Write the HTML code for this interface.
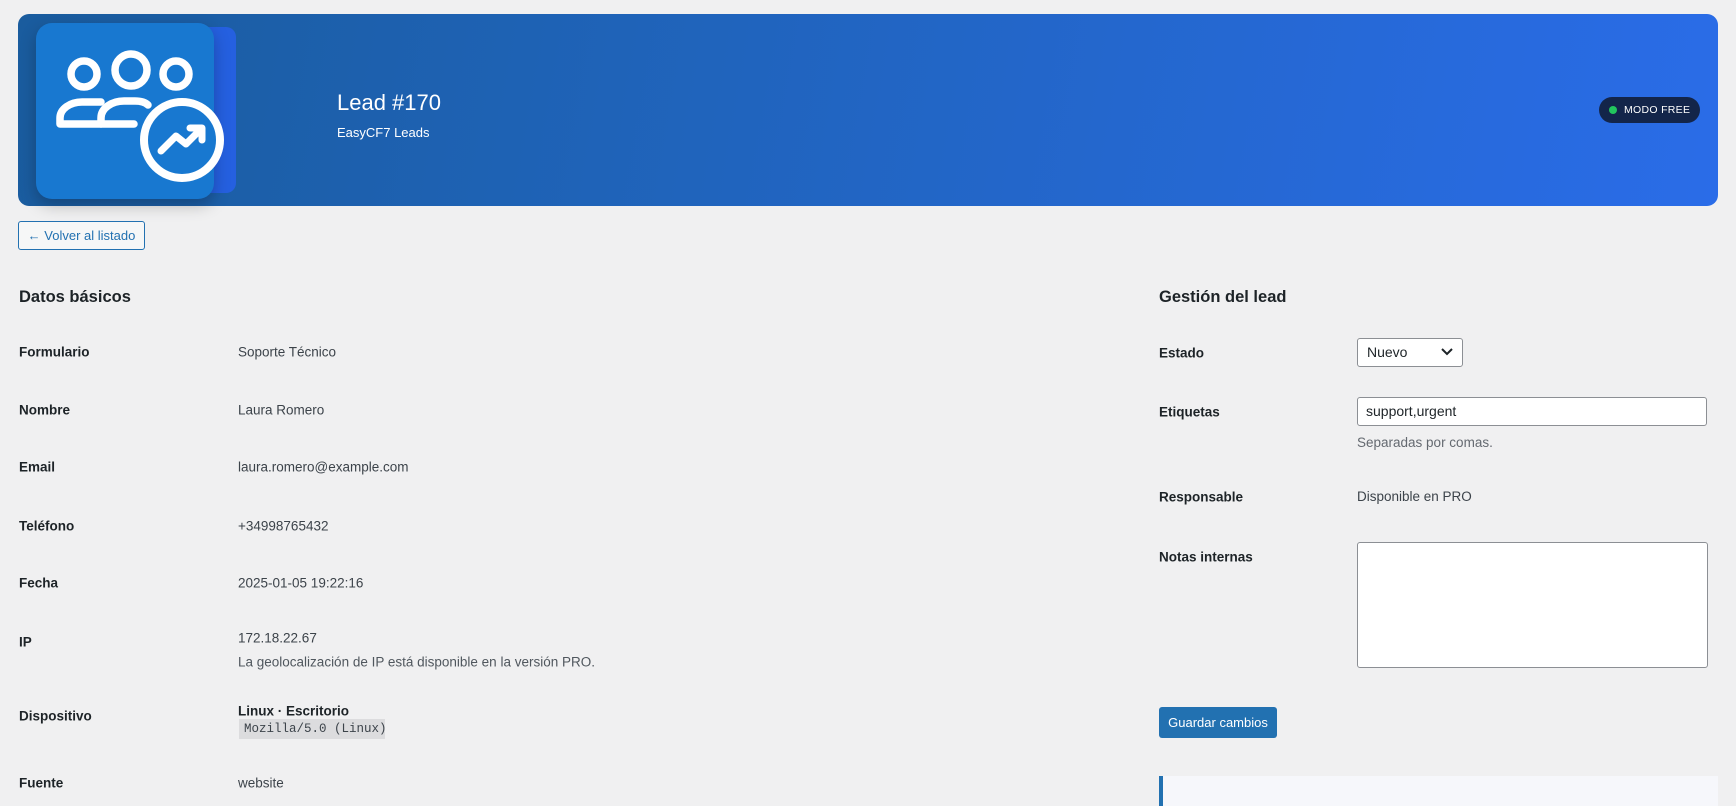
<!DOCTYPE html>
<html><head><meta charset="utf-8"><style>
*{margin:0;padding:0;box-sizing:border-box}
body{width:1736px;height:802px;overflow:hidden;background:#f0f0f1;font-family:"Liberation Sans",sans-serif;color:#1d2327;position:relative}
.a{position:absolute;white-space:nowrap}
.hdr{position:absolute;left:18px;top:14px;width:1700px;height:192px;border-radius:11px;background:linear-gradient(100deg,#1a5c9e 0%,#1f63b8 35%,#2a6ce8 100%)}
.lbl{position:absolute;left:19px;font-size:13.5px;font-weight:bold;color:#1d2327;transform:translateY(-50%)}
.val{position:absolute;left:238px;font-size:13.5px;color:#3c434a;transform:translateY(-50%)}
.rl{position:absolute;left:1159px;font-size:13.5px;font-weight:bold;transform:translateY(-50%)}
</style></head><body>
<div class="hdr"></div>
<div class="a" style="left:200px;top:27px;width:36px;height:166px;background:#2560e0;border-radius:10px"></div>
<div class="a" style="left:36px;top:23px;width:178px;height:176px;background:#1878d0;border-radius:16px;box-shadow:0 6px 16px rgba(0,0,0,.25)"></div>
<svg class="a" style="left:0;top:0" width="260" height="210" viewBox="0 0 260 210" fill="none" stroke="#fff" stroke-linecap="round" stroke-linejoin="round">
<circle cx="84" cy="74" r="13" stroke-width="7.5"/>
<circle cx="131" cy="70" r="16" stroke-width="7.5"/>
<circle cx="176" cy="74" r="13" stroke-width="7.5"/>
<path d="M101 102 H82 C70 102 60 109 60 118 V124 H134" stroke-width="7.5"/>
<path d="M101 124 V118 C101 108 112 101 124 101 H135 C140 101 145 102 148 105" stroke-width="7.5"/>
<circle cx="182" cy="140" r="38" fill="#1878d0" stroke-width="8"/>
<path d="M161 151 L176 136 L186 144 L201 129" stroke-width="7"/>
<path d="M190 128 H202 V140" stroke-width="7"/>
</svg>
<div class="a" style="left:337px;top:90px;font-size:22px;color:#fff">Lead #170</div>
<div class="a" style="left:337px;top:125px;font-size:13px;color:#fff">EasyCF7 Leads</div>
<div class="a" style="left:1599px;top:97px;width:101px;height:26px;border-radius:13px;background:#13254a;color:#fff;font-size:10.5px;letter-spacing:.3px;line-height:26px;padding-left:25px">MODO FREE</div>
<div class="a" style="left:1609px;top:106px;width:8px;height:8px;border-radius:50%;background:#22c55e"></div>
<div class="a" style="left:18px;top:221px;width:127px;height:29px;border:1px solid #2271b1;border-radius:3px;background:#f6f7f7;color:#2271b1;font-size:13px;line-height:27px;text-align:center">← Volver al listado</div>
<div class="a" style="left:19px;top:288px;font-size:16.5px;font-weight:bold">Datos básicos</div>
<div class="lbl" style="top:352px">Formulario</div><div class="val" style="top:352px">Soporte Técnico</div>
<div class="lbl" style="top:410px">Nombre</div><div class="val" style="top:410px">Laura Romero</div>
<div class="lbl" style="top:467px">Email</div><div class="val" style="top:467px">laura.romero@example.com</div>
<div class="lbl" style="top:526px">Teléfono</div><div class="val" style="top:526px">+34998765432</div>
<div class="lbl" style="top:583px">Fecha</div><div class="val" style="top:583px">2025-01-05 19:22:16</div>
<div class="lbl" style="top:642px">IP</div><div class="val" style="top:638px">172.18.22.67</div>
<div class="val" style="top:662px;color:#50575e">La geolocalización de IP está disponible en la versión PRO.</div>
<div class="lbl" style="top:716px">Dispositivo</div><div class="val" style="top:711px;font-weight:bold;color:#1d2327">Linux · Escritorio</div>
<div class="a" style="left:239px;top:719px;width:146px;height:20px;background:#dcdcde;font-family:'Liberation Mono',monospace;font-size:12.5px;line-height:20px;padding-left:5px;color:#3c434a">Mozilla/5.0 (Linux)</div>
<div class="lbl" style="top:783px">Fuente</div><div class="val" style="top:783px">website</div>
<div class="a" style="left:1159px;top:288px;font-size:16.5px;font-weight:bold">Gestión del lead</div>
<div class="rl" style="top:353px">Estado</div>
<div class="a" style="left:1357px;top:338px;width:106px;height:29px;border:1px solid #8c8f94;border-radius:3px;background:#fff;font-size:14px;line-height:27px;padding-left:9px">Nuevo</div>
<svg class="a" style="left:1440px;top:347px" width="14" height="10"><path d="M2 2 L7 7 L12 2" stroke="#1d2327" stroke-width="2" fill="none"/></svg>
<div class="rl" style="top:412px">Etiquetas</div>
<div class="a" style="left:1357px;top:397px;width:350px;height:29px;border:1px solid #8c8f94;border-radius:3px;background:#fff;font-size:14px;line-height:27px;padding-left:8px">support,urgent</div>
<div class="a" style="left:1357px;top:435px;font-size:13.5px;color:#646970">Separadas por comas.</div>
<div class="rl" style="top:497px">Responsable</div>
<div class="a" style="left:1357px;top:489px;font-size:13.5px;color:#3c434a">Disponible en PRO</div>
<div class="rl" style="top:557px">Notas internas</div>
<div class="a" style="left:1357px;top:542px;width:351px;height:126px;border:1px solid #8c8f94;border-radius:3px;background:#fff"></div>
<div class="a" style="left:1159px;top:707px;width:118px;height:31px;background:#2271b1;border-radius:3px;color:#fff;font-size:13px;line-height:31px;text-align:center">Guardar cambios</div>
<div class="a" style="left:1159px;top:776px;width:559px;height:30px;background:#f6f7fb;border-left:4px solid #2271b1"></div>
</body></html>
